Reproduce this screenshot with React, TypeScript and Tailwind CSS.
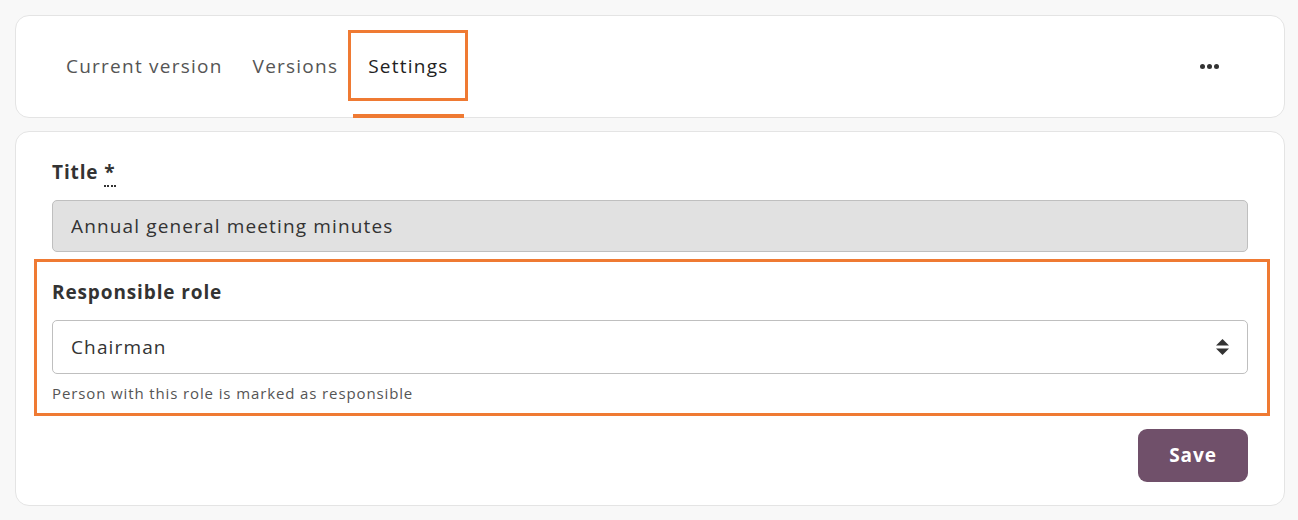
import { useState } from 'react'

const font = { fontFamily: '"Open Sans", "Noto Sans", sans-serif' }

const tabs = ['Current version', 'Versions', 'Settings']

export default function App() {
  const [active, setActive] = useState('Settings')
  const [role, setRole] = useState('Chairman')

  return (
    <div className="min-h-screen bg-[#f8f8f8] py-[15px] pl-[15px] pr-[13px] tracking-[0.055em]" style={font}>
      <div className="flex h-[103px] items-stretch justify-between rounded-[14px] border border-[#e4e4e4] bg-white pl-[35px] pr-[65px]">
        <nav className="flex items-stretch">
          {tabs.map((t) => (
            <button
              key={t}
              onClick={() => setActive(t)}
              className={
                'relative flex items-center px-[15px] text-[19px] tracking-[0.065em] ' +
                (active === t ? 'text-[#222]' : 'text-[#555]')
              }
            >
              {t}
              {active === t && (
                <>
                  <span className="absolute bottom-[-1px] left-0 right-0 h-[4px] bg-[#ef7a33]" />
                  <span className="absolute -left-[5px] -right-[4px] top-[14px] bottom-[16px] border-[3px] border-[#ef7a33]" />
                </>
              )}
            </button>
          ))}
        </nav>
        <button className="flex items-center gap-[2px]">
          <span className="h-[5px] w-[5px] rounded-full bg-[#333]" />
          <span className="h-[5px] w-[5px] rounded-full bg-[#333]" />
          <span className="h-[5px] w-[5px] rounded-full bg-[#333]" />
        </button>
      </div>

      <div className="mt-[13px] rounded-[14px] border border-[#e4e4e4] bg-white px-[36px] pt-[26px] pb-[23px]">
        <label className="block text-[19px] leading-[28px] font-bold text-[#333]">
          Title{' '}
          <abbr title="required" className="no-underline border-b-2 border-dotted border-[#333]">
            *
          </abbr>
        </label>
        <input
          readOnly
          value="Annual general meeting minutes"
          className="mt-[14px] block h-[52px] w-full rounded-[5px] border border-[#bfbfbf] bg-[#e1e1e1] px-[18px] text-[19px] tracking-[0.06em] text-[#333] outline-none"
        />

        <div className="mt-[7px] -ml-[18px] -mr-[22px] border-[3px] border-[#ef7a33] pl-[15px] pr-[19px] pt-[16px] pb-[8px]">
          <label className="block text-[19px] leading-[28px] font-bold text-[#333]">Responsible role</label>
          <div className="relative mt-[14px]">
            <select
              value={role}
              onChange={(e) => setRole(e.target.value)}
              className="block h-[54px] w-full appearance-none rounded-[5px] border border-[#bfbfbf] bg-white px-[18px] text-[19px] tracking-[0.06em] text-[#333] outline-none"
            >
              <option>Chairman</option>
              <option>Secretary</option>
              <option>Treasurer</option>
            </select>
            <svg
              className="pointer-events-none absolute right-[19px] top-1/2 -translate-y-1/2"
              width="13"
              height="16"
              viewBox="0 0 13 16"
            >
              <path d="M6.5 0 L13 6.5 H0 Z" fill="#333" />
              <path d="M0 9.5 H13 L6.5 16 Z" fill="#333" />
            </svg>
          </div>
          <p className="mt-[7px] text-[15px] leading-[24px] text-[#555]">Person with this role is marked as responsible</p>
        </div>

        <div className="mt-[13px] flex justify-end">
          <button className="h-[53px] w-[110px] rounded-[9px] bg-[#70506a] text-[19px] font-bold text-white">
            Save
          </button>
        </div>
      </div>
    </div>
  )
}
